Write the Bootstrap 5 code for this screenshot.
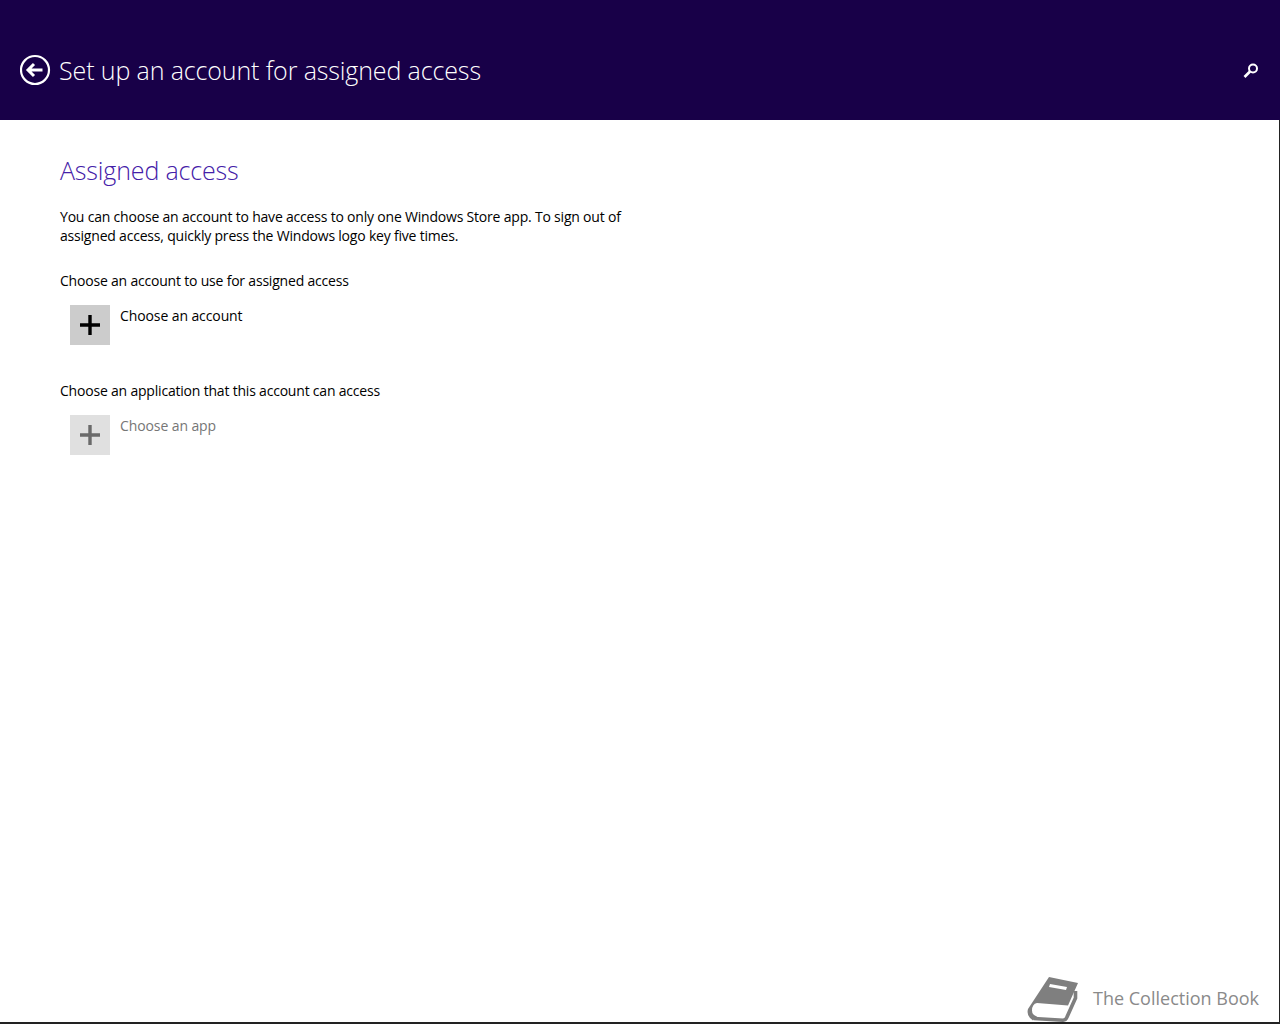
<!DOCTYPE html>
<html lang="en">
<head>
<meta charset="utf-8">
<title>Set up an account for assigned access</title>
<link href="https://cdn.jsdelivr.net/npm/bootstrap@5.3.0/dist/css/bootstrap.min.css" rel="stylesheet">
<style>
html, body { height: 1024px; overflow: hidden; }
body { font-family: "Open Sans", "Noto Sans", sans-serif; color: #000; background: #fff; }
.screen { width: 1280px; height: 1024px; border-right: 1px solid #222; border-bottom: 2px solid #222; }
.head-bar { height: 120px; background: #180048; color: #fff; margin-right: -1px; padding: 54px 21px 0 20px; }
.head-title { font-size: 25px; font-weight: 300; line-height: 32px; margin: 0 0 0 8px; letter-spacing: -.12px; }
.main-pane { padding: 34px 0 0 60px; }
.sec-title { font-size: 25px; font-weight: 300; line-height: 32px; color: #4420a8; margin: 0 0 21px; letter-spacing: -.15px; }
.body-copy { font-size: 14px; line-height: 19px; letter-spacing: -.2px; margin: 0; }
.intro { width: 600px; margin-bottom: 26px; }
.pick-row { padding-left: 10px; margin: 15px 0 36px; gap: 10px; }
.plus-tile { width: 40px; height: 40px; background: #ccc; }
.pick-label { margin-top: 1px; letter-spacing: -.1px; }
.pick-off .plus-tile { background: #e0e0e0; }
.pick-off .pick-label { color: #767676; }
.brand { position: absolute; right: 20px; bottom: 0; height: 46px; gap: 14px; color: #8a8a8a; font-size: 18px; }
.brand-name { margin-bottom: 2px; }
</style>
</head>
<body>
<div class="screen position-relative">
  <header class="head-bar d-flex align-items-start">
    <svg width="31" height="32" viewBox="0 0 31 32" fill="none" stroke="#fff" aria-hidden="true"><circle cx="15" cy="16" r="14" stroke-width="2.2"/><path d="M8 16h14.500M14 10l-6 6 6 6" stroke-width="3"/></svg>
    <h1 class="head-title flex-grow-1">Set up an account for assigned access</h1>
    <svg class="mt-2" width="16" height="16" viewBox="0 0 16 16" fill="none" stroke="#fff" aria-hidden="true"><circle cx="10" cy="6.500" r="4" stroke-width="2"/><path d="M7 9.500 1.500 15" stroke-width="2.600"/></svg>
  </header>
  <main class="main-pane">
    <h2 class="sec-title">Assigned access</h2>
    <p class="body-copy intro">You can choose an account to have access to only one Windows Store app. To sign out of assigned access, quickly press the Windows logo key five times.</p>
    <p class="body-copy">Choose an account to use for assigned access</p>
    <div class="pick-row d-flex">
      <div class="plus-tile d-flex align-items-center justify-content-center flex-shrink-0">
        <svg width="20" height="20" viewBox="0 0 20 20" aria-hidden="true"><path d="M10 0v20M0 10h20" stroke="#000" stroke-width="3.400"/></svg>
      </div>
      <div class="body-copy pick-label">Choose an account</div>
    </div>
    <p class="body-copy">Choose an application that this account can access</p>
    <div class="pick-row pick-off d-flex">
      <div class="plus-tile d-flex align-items-center justify-content-center flex-shrink-0">
        <svg width="20" height="20" viewBox="0 0 20 20" aria-hidden="true"><path d="M10 0v20M0 10h20" stroke="#6a6a6a" stroke-width="3.400"/></svg>
      </div>
      <div class="body-copy pick-label">Choose an app</div>
    </div>
  </main>
  <div class="brand d-flex align-items-center">
    <svg width="52" height="46" viewBox="0 0 52 46" aria-hidden="true"><path fill="#7f7f7f" d="M22 1 51 7 41 29.500 10 27Q5 28 5 34.500 5 39 10 40.500L6 44.500Q-1 40 1 33Z"/><path fill="none" stroke="#7f7f7f" stroke-width="3.600" d="M7 42.500 36 44.200Q39 44 40 41L48.500 22V15"/><path fill="#fff" d="M23 8 40 11 39 14 22 11Z"/></svg>
    <span class="brand-name">The Collection Book</span>
  </div>
</div>
</body>
</html>
